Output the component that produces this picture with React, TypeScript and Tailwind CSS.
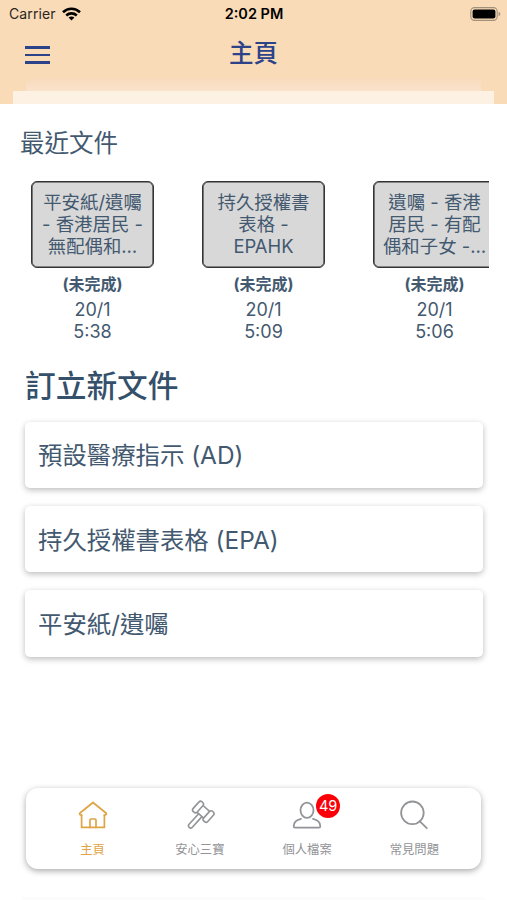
import React from "react";

const recentDocs = [
  { lines: ["平安紙/遺囑", "- 香港居民 -", "無配偶和…"], date: "20/1", time: "5:38" },
  { lines: ["持久授權書", "表格 -", "EPAHK"], date: "20/1", time: "5:09" },
  { lines: ["遺囑 - 香港", "居民 - 有配", "偶和子女 -…"], date: "20/1", time: "5:06" },
];

const newDocs = ["預設醫療指示 (AD)", "持久授權書表格 (EPA)", "平安紙/遺囑"];

const HomeIcon = () => (
  <svg width="30" height="30" viewBox="0 0 30 30" fill="none" stroke="currentColor" strokeWidth="1.7" strokeLinejoin="round" strokeLinecap="round">
    <path d="M3.6 15V27.4H26.4V15" />
    <path d="M3.6 15 2.4 14.8Q1 14 2 13L15 2.5 28 13Q29 14 27.6 14.8L26.4 15" />
    <path d="M12 27.4V20Q12 19 13 19H17Q18 19 18 20V27.4" />
  </svg>
);

const GavelIcon = () => (
  <svg width="30" height="30" viewBox="0 0 30 30" fill="none" stroke="currentColor" strokeWidth="1.6" strokeLinejoin="round">
    <g transform="rotate(42 18.3 11.8)">
      <rect x="8.5" y="5.3" width="5.4" height="13" rx="2.3" />
      <rect x="22.7" y="5.3" width="5.4" height="13" rx="2.3" />
      <path d="M13.9 7.3H22.7M13.9 16.3H22.7" />
      <path d="M16.1 16.3V30.6Q16.1 32.8 18.3 32.8T20.5 30.6V16.3" />
    </g>
  </svg>
);

const ProfileIcon = () => (
  <svg width="30" height="30" viewBox="0 0 30 30" fill="none" stroke="currentColor" strokeWidth="1.8" strokeLinejoin="round" strokeLinecap="round">
    <ellipse cx="15" cy="10.2" rx="6.5" ry="7.6" />
    <path d="M9 18.8C4.6 19.7 1.7 22.6 1.7 26.2Q1.7 27.6 3.2 27.6H26.8Q28.3 27.6 28.3 26.2C28.3 22.6 25.4 19.7 21 18.8" />
  </svg>
);

const SearchIcon = () => (
  <svg width="30" height="30" viewBox="0 0 30 30" fill="none" stroke="currentColor" strokeWidth="1.8" strokeLinecap="round">
    <circle cx="13.4" cy="12.8" r="11.3" />
    <path d="M20.6 21.2 27.8 28.2" />
  </svg>
);

const tabs = [
  { label: "主頁", icon: <HomeIcon />, active: true },
  { label: "安心三寶", icon: <GavelIcon /> },
  { label: "個人檔案", icon: <ProfileIcon />, badge: 49 },
  { label: "常見問題", icon: <SearchIcon /> },
];

const StatusBar = () => (
  <div className="grid h-7 grid-cols-3 items-center pr-[6px] pb-px pl-[9px] text-[14px] text-black">
    <div className="flex items-center gap-[6px]">
      <span className="tracking-[0.1px] text-[#2b251f]">Carrier</span>
      <svg width="19" height="14" viewBox="0 0 19 14" fill="none" stroke="black" strokeWidth="2.6">
        <path d="M1 5.2C5.8.5 13.2.5 18 5.2" />
        <path d="M4.2 8.5C7.2 5.7 11.8 5.7 14.8 8.5" />
        <path d="M9.5 13.5 6.6 10.5C8.2 9 10.8 9 12.4 10.5Z" fill="black" stroke="none" />
      </svg>
    </div>
    <span className="pr-[2px] text-center text-[14.5px] font-semibold">2:02 PM</span>
    <div className="flex justify-end">
      <svg width="31" height="14" viewBox="0 0 31 14">
        <rect x="0.8" y="0.6" width="26.4" height="12.8" rx="3.8" fill="none" stroke="#a29079" strokeWidth="1.1" />
        <rect x="2.6" y="2.4" width="22.8" height="9.2" rx="2" fill="black" />
        <path d="M28.6 4.7Q30.4 5.4 30.4 7T28.6 9.3Z" fill="#a29079" />
      </svg>
    </div>
  </div>
);

const App = () => {
  return (
    <div
      lang="zh-Hant"
      className="flex h-[900px] w-[507px] flex-col overflow-hidden bg-white font-['Inter','Noto_Sans_CJK_TC',sans-serif] text-[#435970]"
    >
      {/* Header */}
      <header className="flex h-[104px] shrink-0 flex-col bg-[#f9dbb8]">
        <StatusBar />
        <div className="grid h-[51px] grid-cols-3 items-center px-[25px]">
          <div className="flex w-[25px] flex-col gap-[5px] pt-[3px]">
            <span className="h-[2.4px] bg-[#2c4389]" />
            <span className="h-[2.4px] bg-[#2c4389]" />
            <span className="h-[2.4px] bg-[#2c4389]" />
          </div>
          <h1 className="pb-[2px] text-center text-[24.5px] leading-[48px] font-medium text-[#2c4389]">主頁</h1>
        </div>
        <div className="mx-[26px] h-3 bg-linear-to-b from-[#f9dcbd] to-[#fae2cb]" />
        <div className="mx-[13px] h-[13px] bg-[#fdf1e4]" />
      </header>

      {/* Recent documents */}
      <h2 className="mt-[21px] pl-5 text-[24.5px] leading-9">最近文件</h2>
      <div className="mt-5 mr-[18px] flex shrink-0 gap-12 overflow-hidden pl-[31px]">
        {recentDocs.map((doc) => (
          <div key={doc.time} className="w-[123px] shrink-0 text-center text-[18px] leading-[22px]">
            <div className="flex h-[87px] flex-col justify-center rounded-[6px] border border-[#333] bg-[#d8d8d8] pb-[2px] text-[18.4px] whitespace-nowrap shadow-[inset_0_0_0_0.6px_#333]">
              {doc.lines.map((line) => (
                <span key={line}>{line}</span>
              ))}
            </div>
            <p className="mt-[5px] mb-[4px] text-[16px] leading-[22px] font-bold">(未完成)</p>
            <p>{doc.date}</p>
            <p>{doc.time}</p>
          </div>
        ))}
      </div>

      {/* New documents */}
      <h2 className="mt-5 pl-[25px] text-[30.7px] leading-[46px] font-medium text-[#34506b]">訂立新文件</h2>
      <div className="mt-[12.6px] flex flex-col gap-[18px] pr-6 pl-[25px]">
        {newDocs.map((name) => (
          <button
            key={name}
            className="h-[66.4px] rounded-[5px] bg-white pt-px pl-[13px] text-left text-[24.4px] leading-9 shadow-[0_2px_6px_rgba(0,0,0,0.27)]"
          >
            {name}
          </button>
        ))}
      </div>

      {/* Bottom tabs */}
      <nav className="mt-auto mr-[26px] mb-[28px] ml-[26px] flex h-[81px] shrink-0 rounded-[12px] bg-white px-[13px] shadow-[0_2px_6px_rgba(0,0,0,0.34)]">
        {tabs.map((tab) => (
          <div
            key={tab.label}
            className={`flex flex-1 flex-col items-center pt-3 ${tab.active ? "text-[#dfa446]" : "text-[#929497]"}`}
          >
            <div className="relative">
              {tab.icon}
              {tab.badge && (
                <span className="absolute -top-[6px] left-[24px] flex size-6 items-center justify-center rounded-full bg-[#fb0007] text-[14.5px] text-white">
                  {tab.badge}
                </span>
              )}
            </div>
            <span className="mt-[10px] text-[12.3px] leading-5">{tab.label}</span>
          </div>
        ))}
      </nav>
      <div className="mx-[22px] h-[3px] shrink-0 bg-[#fcfcfc]" />
    </div>
  );
};

export default App;
